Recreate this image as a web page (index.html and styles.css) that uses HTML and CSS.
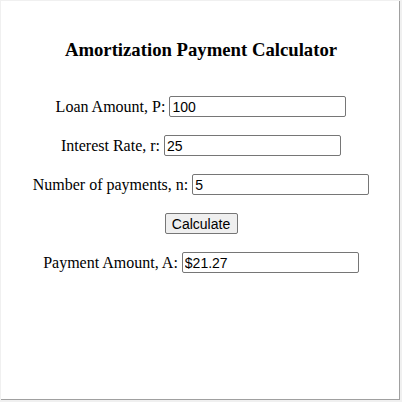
FILE: index.html
```html
<!DOCTYPE html>
<html>
<head>
<meta charset="utf-8">
<link rel="stylesheet" href="styles.css">
</head>
<body>
<div class="frame">
  <h3 class="title">Amortization Payment Calculator</h3>
  <div class="row"><label>Loan Amount, P:</label><input class="field" type="text" value="100"></div>
  <div class="row"><label>Interest Rate, r:</label><input class="field" type="text" value="25"></div>
  <div class="row"><label>Number of payments, n:</label><input class="field" type="text" value="5"></div>
  <div class="row"><button class="btn">Calculate</button></div>
  <div class="row"><label>Payment Amount, A:</label><input class="field" type="text" value="$21.27"></div>
</div>
</body>
</html>
```
FILE: styles.css
```css
html { background: #f0f0f0; }
body { margin: 0; }
.frame {
  margin: 1px 1px 1px 1px;
  width: 399px;
  height: 399px;
  box-sizing: border-box;
  padding-left: 2px;
  background: #fff;
  border-right: 1px solid #a0a0a0;
  border-bottom: 1px solid #a0a0a0;
  font-family: "Liberation Serif", "Times New Roman", serif;
  font-size: 16px;
  color: #000;
  display: flex;
  flex-direction: column;
  align-items: center;
}
.title {
  font-size: 18.72px;
  font-weight: bold;
  margin: 38px 0 0 0;
  line-height: 22px;
  height: 22px;
}
.row {
  display: flex;
  align-items: center;
  justify-content: center;
  height: 21px;
  margin-top: 18px;
  gap: 4px;
}
.row:nth-child(2) { margin-top: 35px; }
.field {
  width: 177px;
  height: 21px;
  box-sizing: border-box;
  border: 1px solid #767676;
  border-radius: 2px;
  padding: 1px 2px;
  font-family: "Liberation Sans", Arial, sans-serif;
  font-size: 14px;
  color: #000;
  background: #fff;
  margin: 0;
}
.btn {
  width: 73px;
  height: 21px;
  box-sizing: border-box;
  padding: 1px 4px;
  border: 1px solid #767676;
  border-radius: 2px;
  background: #efefef;
  font-family: "Liberation Sans", Arial, sans-serif;
  font-size: 14px;
  color: #000;
  margin: 0;
}
```
